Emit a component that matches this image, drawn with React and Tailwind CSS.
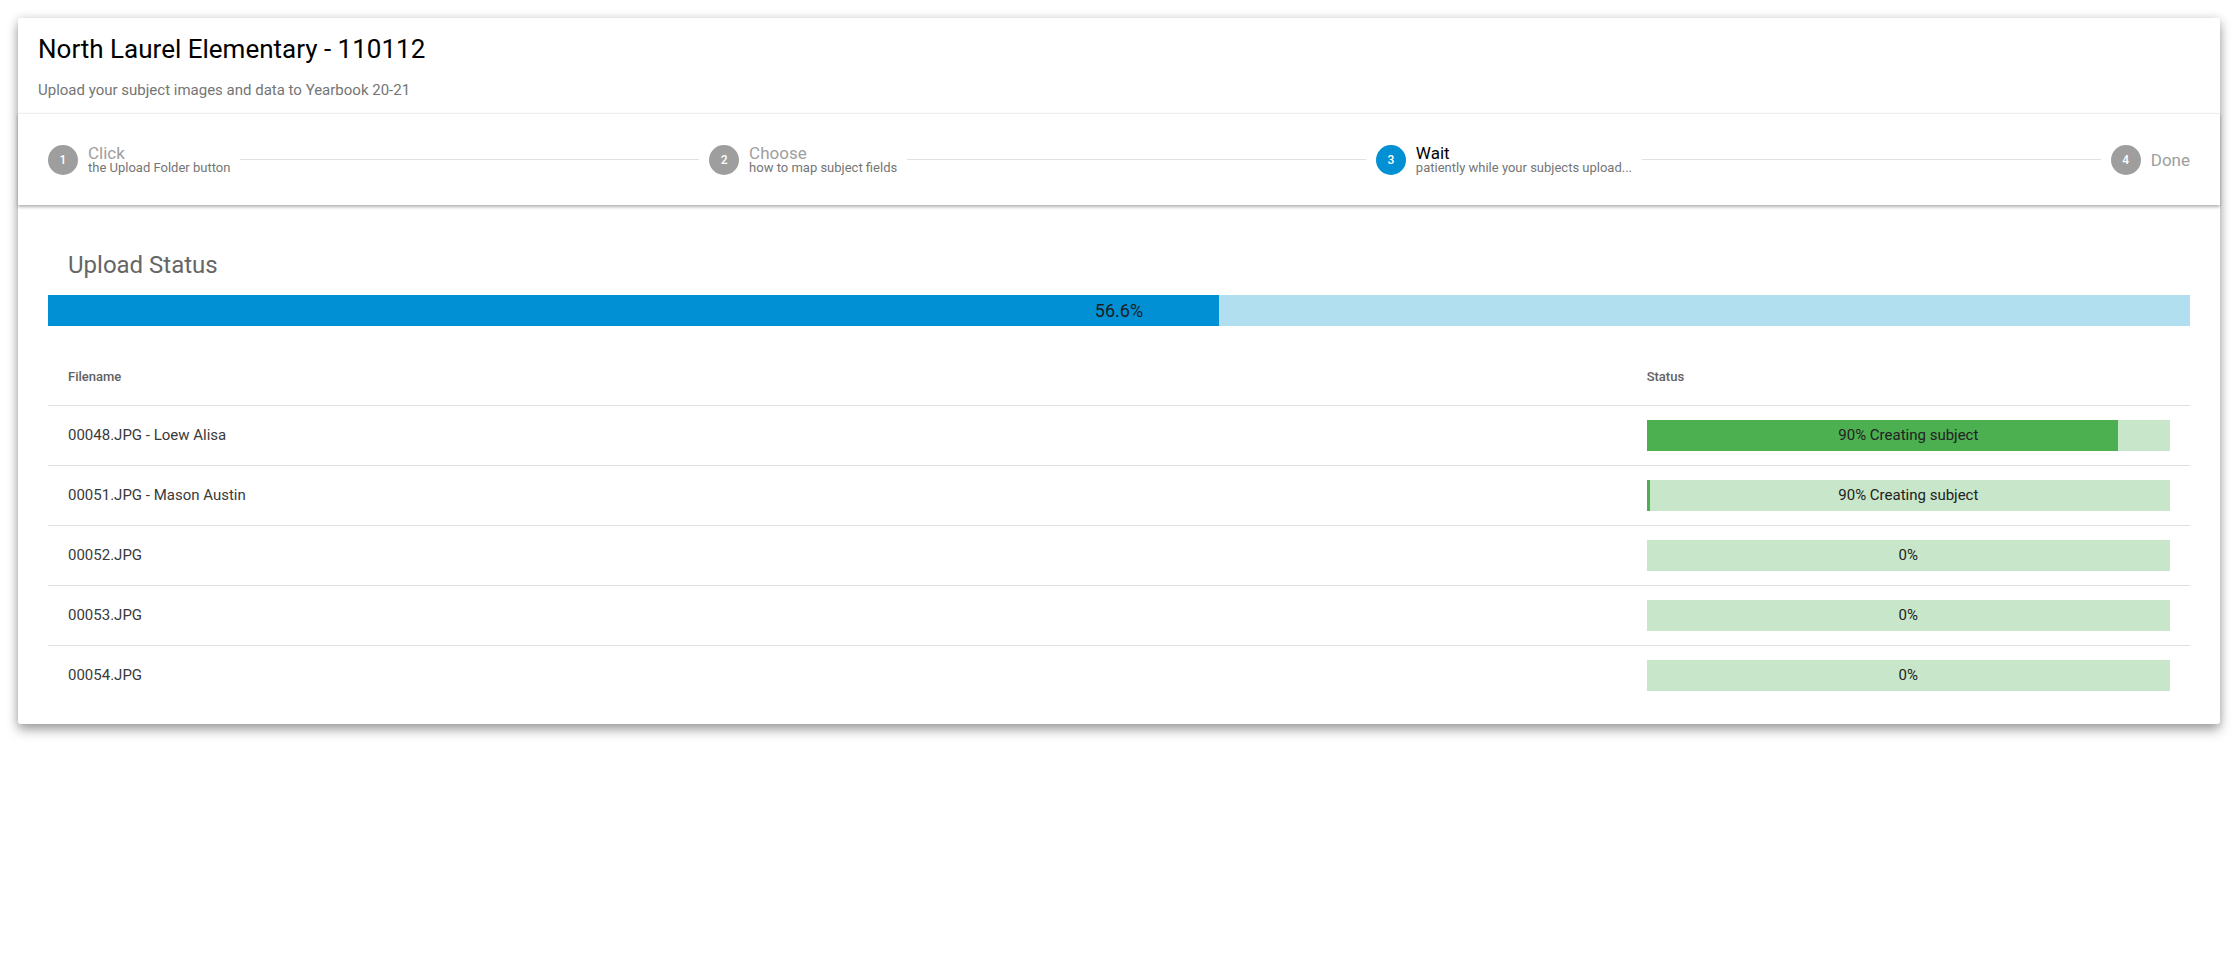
const STEPS = [
  { n: 1, label: 'Click', sub: 'the Upload Folder button', state: 'todo' },
  { n: 2, label: 'Choose', sub: 'how to map subject fields', state: 'todo' },
  { n: 3, label: 'Wait', sub: 'patiently while your subjects upload...', state: 'active' },
  { n: 4, label: 'Done', sub: null, state: 'todo' },
]

const FILES = [
  { name: '00048.JPG - Loew Alisa', fill: '90%', text: '90% Creating subject' },
  { name: '00051.JPG - Mason Austin', fill: '3px', text: '90% Creating subject' },
  { name: '00052.JPG', fill: '0px', text: '0%' },
  { name: '00053.JPG', fill: '0px', text: '0%' },
  { name: '00054.JPG', fill: '0px', text: '0%' },
]

function Step({ step }) {
  const active = step.state === 'active'
  return (
    <div className="flex items-center gap-[10px] shrink-0">
      <div
        className={`w-[30px] h-[30px] rounded-full flex items-center justify-center text-white text-[12px] font-medium ${
          active ? 'bg-[#0090d3]' : 'bg-[#9e9e9e]'
        }`}
      >
        {step.n}
      </div>
      <div className="flex flex-col">
        <span className={`text-[17px] leading-[16px] ${active ? 'text-black' : 'text-[#9e9e9e]'}`}>
          {step.label}
        </span>
        {step.sub && (
          <span className="text-[13px] leading-[13px] text-[#757575]">{step.sub}</span>
        )}
      </div>
    </div>
  )
}

export default function App() {
  const stepper = []
  STEPS.forEach((s, i) => {
    stepper.push(<Step key={'s' + s.n} step={s} />)
    if (i < STEPS.length - 1) stepper.push(<div key={'l' + s.n} className="flex-1 h-px bg-[#e0e0e0]" />)
  })

  return (
    <div className="min-h-screen bg-white p-[18px] font-['Roboto',sans-serif]">
      <div className="bg-white rounded-[3px] shadow-[0_6px_12px_rgba(0,0,0,0.35),0_0_10px_rgba(0,0,0,0.12)]">
        {/* Header */}
        <div className="px-5 pt-[16px] pb-[13px]">
          <h1 className="text-[26px] leading-[30px] text-black font-normal">North Laurel Elementary - 110112</h1>
          <p className="mt-[16px] text-[15px] leading-[20px] text-[#757575]">
            Upload your subject images and data to Yearbook 20-21
          </p>
        </div>

        {/* Stepper */}
        <div className="h-[92px] px-[30px] flex items-center gap-[10px] border-t border-[#eeeeee] shadow-[0_2px_3px_rgba(0,0,0,0.3)] relative">
          {stepper}
        </div>

        {/* Body */}
        <div className="px-[30px] pt-[46px] pb-[19px]">
          <h2 className="pl-5 text-[24px] leading-[28px] text-[#666666] font-normal">Upload Status</h2>

          <div className="relative mt-[16px] h-[31px] bg-[#b2dff0]">
            <div className="h-full bg-[#0090d3]" style={{ width: '54.65%' }} />
            <div className="absolute inset-0 flex items-center justify-center text-[18px] text-[#1c1c1c]">
              56.6%
            </div>
          </div>

          <table className="w-full mt-[23px] border-collapse">
            <thead>
              <tr className="h-[56px] border-b border-[#e0e0e0]">
                <th className="w-[73.7%] px-5 text-left text-[13px] font-medium text-[#616161]">Filename</th>
                <th className="px-5 text-left text-[13px] font-medium text-[#616161]">Status</th>
              </tr>
            </thead>
            <tbody>
              {FILES.map((f, i) => (
                <tr
                  key={f.name}
                  className={`h-[60px] ${i < FILES.length - 1 ? 'border-b border-[#e0e0e0]' : ''}`}
                >
                  <td className="px-5 text-[15px] text-[#3a3a3a]">{f.name}</td>
                  <td className="px-5">
                    <div className="relative h-[31px] bg-[#c8e6c9]">
                      <div className="h-full bg-[#4caf50]" style={{ width: f.fill }} />
                      <div className="absolute inset-0 flex items-center justify-center text-[15px] text-[#222222]">
                        {f.text}
                      </div>
                    </div>
                  </td>
                </tr>
              ))}
            </tbody>
          </table>
        </div>
      </div>
    </div>
  )
}
